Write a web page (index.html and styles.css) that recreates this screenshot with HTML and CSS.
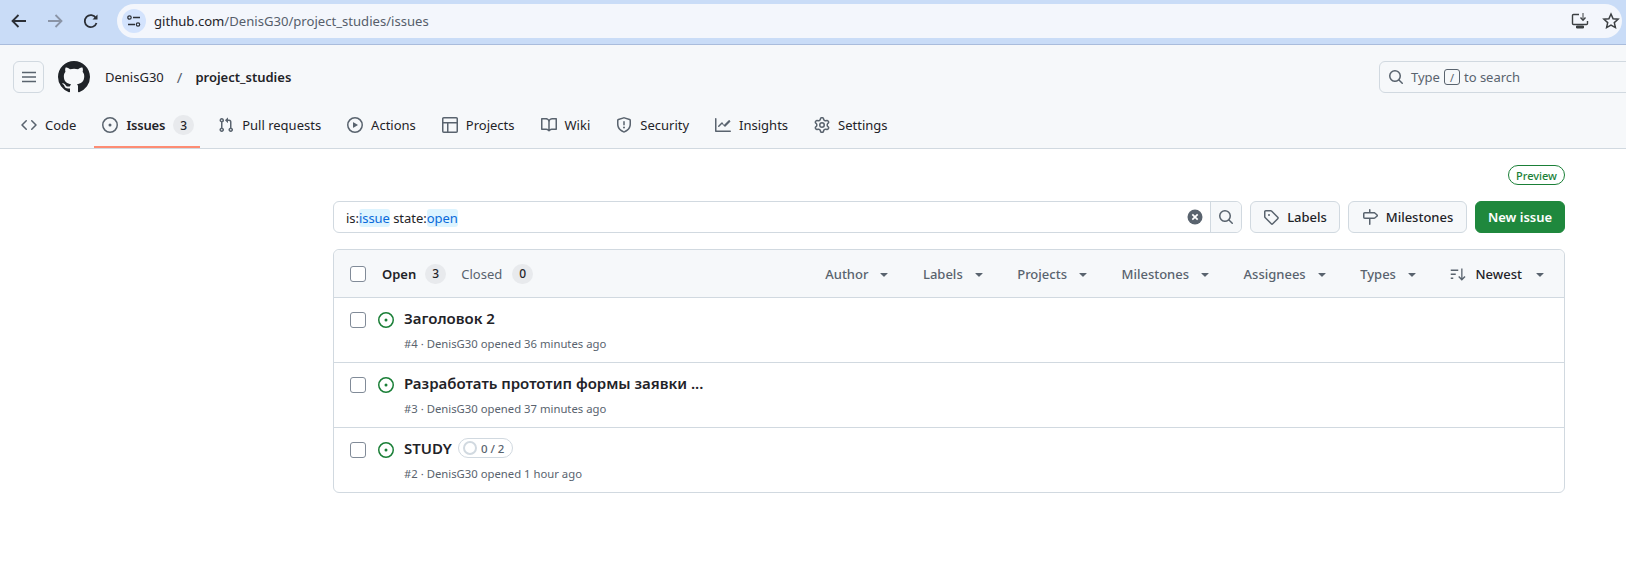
FILE: index.html
```html
<!DOCTYPE html>
<html lang="en">
<head>
    <meta charset="UTF-8">
    <title>Issues - DenisG30/project_studies</title>
    <link rel="stylesheet" href="styles.css">
</head>
<body>

<svg class="sprite" width="0" height="0">
    <symbol id="i-code" viewBox="0 0 16 16"><path d="M11.28 3.22a.75.75 0 0 0-1.06 1.06L13.94 8l-3.72 3.72a.749.749 0 0 0 1.06 1.06l4.25-4.25a.75.75 0 0 0 0-1.06Zm-6.56 0a.75.75 0 0 1 1.06 1.06L2.06 8l3.72 3.72a.749.749 0 1 1-1.06 1.06L.47 8.53a.75.75 0 0 1 0-1.06Z"/></symbol>
    <symbol id="i-issue" viewBox="0 0 16 16"><path d="M8 9.5a1.5 1.5 0 1 0 0-3 1.5 1.5 0 0 0 0 3Z"/><path d="M8 0a8 8 0 1 1 0 16A8 8 0 0 1 8 0ZM1.5 8a6.5 6.5 0 1 0 13 0 6.5 6.5 0 0 0-13 0Z"/></symbol>
    <symbol id="i-pull" viewBox="0 0 16 16"><path d="M1.5 3.25a2.25 2.25 0 1 1 3 2.122v5.256a2.251 2.251 0 1 1-1.5 0V5.372A2.25 2.25 0 0 1 1.5 3.25Zm5.677-.177L9.573.677A.25.25 0 0 1 10 .854V2.5h1A2.5 2.5 0 0 1 13.5 5v5.628a2.251 2.251 0 1 1-1.5 0V5a1 1 0 0 0-1-1h-1v1.646a.25.25 0 0 1-.427.177L7.177 3.427a.25.25 0 0 1 0-.354ZM3.75 2.5a.75.75 0 1 0 0 1.5.75.75 0 0 0 0-1.5Zm0 9.5a.75.75 0 1 0 0 1.5.75.75 0 0 0 0-1.5Zm8.25.75a.75.75 0 1 0 1.5 0 .75.75 0 0 0-1.5 0Z"/></symbol>
    <symbol id="i-play" viewBox="0 0 16 16"><path d="M8 0a8 8 0 1 1 0 16A8 8 0 0 1 8 0ZM1.5 8a6.5 6.5 0 1 0 13 0 6.5 6.5 0 0 0-13 0Zm4.879-2.773 4.264 2.559a.25.25 0 0 1 0 .428l-4.264 2.559A.25.25 0 0 1 6 10.559V5.442a.25.25 0 0 1 .379-.215Z"/></symbol>
    <symbol id="i-table" viewBox="0 0 16 16"><path d="M0 1.75C0 .784.784 0 1.75 0h12.5C15.216 0 16 .784 16 1.75v12.5A1.75 1.75 0 0 1 14.25 16H1.75A1.75 1.75 0 0 1 0 14.25ZM6.5 6.5v8h7.75a.25.25 0 0 0 .25-.25V6.5Zm8-1.5V1.75a.25.25 0 0 0-.25-.25H1.75a.25.25 0 0 0-.25.25V5Zm-13 1.5v7.75c0 .138.112.25.25.25H5v-8Z"/></symbol>
    <symbol id="i-book" viewBox="0 0 16 16"><path d="M0 1.75A.75.75 0 0 1 .75 1h4.253c1.227 0 2.317.59 3 1.501A3.743 3.743 0 0 1 11.006 1h4.245a.75.75 0 0 1 .75.75v10.5a.75.75 0 0 1-.75.75h-4.507a2.25 2.25 0 0 0-1.591.659l-.622.621a.75.75 0 0 1-1.06 0l-.622-.621A2.25 2.25 0 0 0 5.258 13H.75a.75.75 0 0 1-.75-.75Zm7.251 10.324.004-5.073-.002-2.253A2.25 2.25 0 0 0 5.003 2.5H1.5v9h3.757a3.75 3.75 0 0 1 1.994.574ZM8.755 4.75l-.004 7.322a3.752 3.752 0 0 1 1.992-.572H14.5v-9h-3.495a2.25 2.25 0 0 0-2.25 2.25Z"/></symbol>
    <symbol id="i-shield" viewBox="0 0 16 16"><path d="M7.467.133a1.748 1.748 0 0 1 1.066 0l5.25 1.68A1.75 1.75 0 0 1 15 3.48V7c0 1.566-.32 3.182-1.303 4.682-.983 1.498-2.585 2.813-5.032 3.855a1.697 1.697 0 0 1-1.33 0c-2.447-1.042-4.049-2.357-5.032-3.855C1.32 10.182 1 8.566 1 7V3.48a1.75 1.75 0 0 1 1.217-1.667Zm.61 1.429a.25.25 0 0 0-.153 0l-5.25 1.68a.25.25 0 0 0-.174.238V7c0 1.358.275 2.666 1.057 3.86.784 1.194 2.121 2.34 4.366 3.297a.196.196 0 0 0 .154 0c2.245-.956 3.582-2.104 4.366-3.298C13.225 9.666 13.5 8.36 13.5 7V3.48a.251.251 0 0 0-.174-.237l-5.25-1.68ZM8.75 4.75v3a.75.75 0 0 1-1.5 0v-3a.75.75 0 0 1 1.5 0ZM9 10.5a1 1 0 1 1-2 0 1 1 0 0 1 2 0Z"/></symbol>
    <symbol id="i-graph" viewBox="0 0 16 16"><path d="M1.5 1.75V13.5h13.75a.75.75 0 0 1 0 1.5H.75a.75.75 0 0 1-.75-.75V1.75a.75.75 0 0 1 1.5 0Zm14.28 2.53-5.25 5.25a.75.75 0 0 1-1.06 0L7 7.06 4.28 9.78a.751.751 0 0 1-1.042-.018.751.751 0 0 1-.018-1.042l3.25-3.25a.75.75 0 0 1 1.06 0L8.98 7.94l4.72-4.72a.751.751 0 0 1 1.042.018.751.751 0 0 1 .018 1.042Z"/></symbol>
    <symbol id="i-gear" viewBox="0 0 16 16"><path d="M8 0a8.2 8.2 0 0 1 .701.031C9.444.095 9.99.645 10.16 1.29l.288 1.107c.018.066.079.158.212.224.231.114.454.243.668.386.123.082.233.09.299.071l1.103-.303c.644-.176 1.392.021 1.82.63.27.385.506.792.704 1.218.315.675.111 1.422-.364 1.891l-.814.806c-.049.048-.098.147-.088.294.016.257.016.515 0 .772-.01.147.038.246.088.294l.814.806c.475.469.679 1.216.364 1.891a7.977 7.977 0 0 1-.704 1.217c-.428.61-1.176.807-1.82.63l-1.102-.302c-.067-.019-.177-.011-.3.071a5.909 5.909 0 0 1-.668.386c-.133.066-.194.158-.211.224l-.29 1.106c-.168.646-.715 1.196-1.458 1.26a8.006 8.006 0 0 1-1.402 0c-.743-.064-1.289-.614-1.458-1.26l-.289-1.106c-.018-.066-.079-.158-.212-.224a5.738 5.738 0 0 1-.668-.386c-.123-.082-.233-.09-.299-.071l-1.103.303c-.644.176-1.392-.021-1.82-.63a8.12 8.12 0 0 1-.704-1.218c-.315-.675-.111-1.422.363-1.891l.815-.806c.05-.048.098-.147.088-.294a6.214 6.214 0 0 1 0-.772c.01-.147-.038-.246-.088-.294l-.815-.806C.635 6.045.431 5.298.746 4.623a7.92 7.92 0 0 1 .704-1.217c.428-.61 1.176-.807 1.82-.63l1.102.302c.067.019.177.011.3-.071.214-.143.437-.272.668-.386.133-.066.194-.158.211-.224l.29-1.106C6.009.645 6.556.095 7.299.03 7.53.01 7.764 0 8 0Zm-.571 1.525c-.036.003-.108.036-.137.146l-.289 1.105c-.147.561-.549.967-.998 1.189-.173.086-.34.183-.5.29-.417.278-.97.423-1.529.27l-1.103-.303c-.109-.03-.175.016-.195.045-.22.312-.412.644-.573.99-.014.031-.021.11.059.19l.815.806c.411.406.562.957.53 1.456a4.709 4.709 0 0 0 0 .582c.032.499-.119 1.05-.53 1.456l-.815.806c-.081.08-.073.159-.059.19.162.346.353.677.573.989.02.03.085.076.195.046l1.102-.303c.56-.153 1.113-.008 1.53.27.161.107.328.204.501.29.447.222.85.629.997 1.189l.289 1.105c.029.109.101.143.137.146a6.6 6.6 0 0 0 1.142 0c.036-.003.108-.036.137-.146l.289-1.105c.147-.561.549-.967.998-1.189.173-.086.34-.183.5-.29.417-.278.97-.423 1.529-.27l1.103.303c.109.029.175-.016.195-.045.22-.313.411-.644.573-.99.014-.031.021-.11-.059-.19l-.815-.806c-.411-.406-.562-.957-.53-1.456a4.709 4.709 0 0 0 0-.582c-.032-.499.119-1.05.53-1.456l.815-.806c.081-.08.073-.159.059-.19a6.464 6.464 0 0 0-.573-.989c-.02-.03-.085-.076-.195-.046l-1.102.303c-.56.153-1.113.008-1.53-.27a4.44 4.44 0 0 0-.501-.29c-.447-.222-.85-.629-.997-1.189l-.289-1.105c-.029-.11-.101-.143-.137-.146a6.6 6.6 0 0 0-1.142 0ZM11 8a3 3 0 1 1-6 0 3 3 0 0 1 6 0ZM9.5 8a1.5 1.5 0 1 0-3.001.001A1.5 1.5 0 0 0 9.5 8Z"/></symbol>
    <symbol id="i-search" viewBox="0 0 16 16"><path d="M10.68 11.74a6 6 0 0 1-7.922-8.982 6 6 0 0 1 8.982 7.922l3.04 3.04a.749.749 0 0 1-.326 1.275.749.749 0 0 1-.734-.215ZM11.5 7a4.499 4.499 0 1 0-8.997 0A4.499 4.499 0 0 0 11.5 7Z"/></symbol>
    <symbol id="i-tag" viewBox="0 0 16 16"><path d="M1 7.775V2.75C1 1.784 1.784 1 2.75 1h5.025c.464 0 .91.184 1.238.513l6.25 6.25a1.75 1.75 0 0 1 0 2.474l-5.026 5.026a1.75 1.75 0 0 1-2.474 0l-6.25-6.25A1.752 1.752 0 0 1 1 7.775Zm1.5 0c0 .066.026.13.073.177l6.25 6.25a.25.25 0 0 0 .354 0l5.025-5.025a.25.25 0 0 0 0-.354l-6.25-6.25a.25.25 0 0 0-.177-.073H2.75a.25.25 0 0 0-.25.25ZM6 5a1 1 0 1 1 0 2 1 1 0 0 1 0-2Z"/></symbol>
    <symbol id="i-milestone" viewBox="0 0 16 16"><path d="M7.75 0a.75.75 0 0 1 .75.75V3h3.634c.414 0 .814.147 1.13.414l2.07 1.75a1.75 1.75 0 0 1 0 2.672l-2.07 1.75a1.75 1.75 0 0 1-1.13.414H8.5v5.25a.75.75 0 0 1-1.5 0V10H2.75A1.75 1.75 0 0 1 1 8.25v-3.5C1 3.784 1.784 3 2.75 3H7V.75A.75.75 0 0 1 7.75 0Zm4.384 8.5a.25.25 0 0 0 .161-.06l2.07-1.75a.248.248 0 0 0 0-.38l-2.07-1.75a.25.25 0 0 0-.161-.06H2.75a.25.25 0 0 0-.25.25v3.5c0 .138.112.25.25.25h9.384Z"/></symbol>
    <symbol id="i-caret" viewBox="0 0 16 16"><path d="m4.427 7.427 3.396 3.396a.25.25 0 0 0 .354 0l3.396-3.396A.25.25 0 0 0 11.396 7H4.604a.25.25 0 0 0-.177.427Z"/></symbol>
    <symbol id="i-sort" viewBox="0 0 16 16"><path d="M.75 3.5h7.5v1.4H.75Zm0 4h5v1.4h-5Zm0 4h2.5v1.4h-2.5Z"/><path d="M12.5 2.5v9.6l2-2 1 1-3.7 3.6-3.6-3.6 1-1 2 2V2.5Z"/></symbol>
</svg>

<div class="browser-bar">
    <svg class="chrome-icon" viewBox="0 0 20 20"><path d="M17 10H4M9.500 4 3.500 10l6 6" fill="none" stroke="#2b2f36" stroke-width="1.800"/></svg>
    <svg class="chrome-icon" viewBox="0 0 20 20"><path d="M3 10h13M10.500 4l6 6-6 6" fill="none" stroke="#8a94a6" stroke-width="1.800"/></svg>
    <svg class="chrome-icon" viewBox="0 0 20 20"><path d="M15.500 12a6 6 0 1 1-.6-5" fill="none" stroke="#2b2f36" stroke-width="1.800"/><path d="M16.500 3.500v5h-5z" fill="#2b2f36"/></svg>
    <div class="omnibox">
        <span class="site-info">
            <svg width="14" height="14" viewBox="0 0 14 14"><path d="M6 3.500h7M1 10.500h7" fill="none" stroke="#2b2f36" stroke-width="1.300"/><circle cx="2.500" cy="3.500" r="1.700" fill="none" stroke="#2b2f36" stroke-width="1.200"/><circle cx="11" cy="10.500" r="1.700" fill="none" stroke="#2b2f36" stroke-width="1.200"/></svg>
        </span>
        <span class="url">github.com<span class="url-path">/DenisG30/project_studies/issues</span></span>
        <svg class="omni-icon" viewBox="0 0 18 18"><path d="M8 2.500H2.500a1 1 0 0 0-1 1v8a1 1 0 0 0 1 1h13a1 1 0 0 0 1-1V9" fill="none" stroke="#3c4043" stroke-width="1.400"/><path d="M5.500 14h7v2h-7zM12 1v6" fill="#3c4043" stroke="#3c4043"/><path d="m9.500 5.500 2.500 2.700 2.500-2.700" fill="none" stroke="#3c4043" stroke-width="1.400"/></svg>
        <svg class="omni-icon star" viewBox="0 0 18 18"><path d="m9 2 2.100 4.700 5 .5-3.800 3.400 1.100 5L9 13l-4.400 2.600 1.100-5-3.800-3.400 5-.5Z" fill="none" stroke="#3c4043" stroke-width="1.500"/></svg>
    </div>
</div>

<header class="app-header">
    <div class="header-top">
        <button class="menu-button">
            <svg width="16" height="16" viewBox="0 0 16 16" class="muted-icon"><path d="M1 2.750h14v1.500H1zM1 7.250h14v1.500H1zM1 11.750h14v1.500H1z"/></svg>
        </button>
        <svg class="logo" viewBox="0 0 16 16"><path d="M8 0c4.420 0 8 3.580 8 8a8.013 8.013 0 0 1-5.450 7.590c-.4.080-.55-.17-.55-.38 0-.27.010-1.130.010-2.200 0-.75-.25-1.230-.54-1.480 1.780-.2 3.650-.88 3.650-3.950 0-.88-.31-1.590-.82-2.150.080-.2.360-1.020-.080-2.120 0 0-.67-.22-2.200.82-.64-.18-1.320-.27-2-.27-.68 0-1.360.090-2 .27-1.530-1.030-2.200-.82-2.200-.82-.44 1.100-.16 1.920-.080 2.120-.51.560-.82 1.280-.82 2.150 0 3.060 1.860 3.750 3.640 3.950-.23.2-.44.550-.51 1.070-.46.210-1.610.550-2.330-.66-.15-.24-.6-.83-1.230-.82-.67.010-.27.380.010.530.34.190.730.9.820 1.130.16.450.680 1.310 2.690.940 0 .670.010 1.300.010 1.490 0 .210-.15.450-.55.380A7.995 7.995 0 0 1 0 8c0-4.420 3.580-8 8-8Z"/></svg>
        <span class="owner">DenisG30</span>
        <span class="slash">/</span>
        <span class="repo">project_studies</span>
        <div class="global-search">
            <svg class="muted-icon" width="16" height="16"><use href="#i-search"/></svg>
            <span>Type</span><kbd>/</kbd><span>to search</span>
        </div>
    </div>
    <nav class="tabs">
        <a class="tab"><svg width="16" height="16"><use href="#i-code"/></svg>Code</a>
        <a class="tab tab-active"><svg width="16" height="16"><use href="#i-issue"/></svg>Issues<span class="count">3</span></a>
        <a class="tab"><svg width="16" height="16"><use href="#i-pull"/></svg>Pull requests</a>
        <a class="tab"><svg width="16" height="16"><use href="#i-play"/></svg>Actions</a>
        <a class="tab"><svg width="16" height="16"><use href="#i-table"/></svg>Projects</a>
        <a class="tab"><svg width="16" height="16"><use href="#i-book"/></svg>Wiki</a>
        <a class="tab"><svg width="16" height="16"><use href="#i-shield"/></svg>Security</a>
        <a class="tab"><svg width="16" height="16"><use href="#i-graph"/></svg>Insights</a>
        <a class="tab"><svg width="16" height="16"><use href="#i-gear"/></svg>Settings</a>
    </nav>
</header>

<main class="content">
    <div class="preview-row"><span class="preview">Preview</span></div>

    <div class="toolbar">
        <div class="filter-box">
            <div class="filter-text">is:<span class="token">issue</span> state:<span class="token">open</span></div>
            <span class="clear">
                <svg width="16" height="16" viewBox="0 0 16 16"><circle cx="8" cy="8" r="7.500" fill="#59636e"/><path d="m5.300 5.300 5.400 5.400m0-5.400-5.400 5.400" stroke="#fff" stroke-width="1.700"/></svg>
            </span>
            <span class="filter-search"><svg class="muted-icon" width="16" height="16"><use href="#i-search"/></svg></span>
        </div>
        <button class="btn btn-labels"><svg class="muted-icon" width="16" height="16"><use href="#i-tag"/></svg>Labels</button>
        <button class="btn btn-milestones"><svg class="muted-icon" width="16" height="16"><use href="#i-milestone"/></svg>Milestones</button>
        <button class="btn btn-primary">New issue</button>
    </div>

    <section class="issues">
        <div class="issues-head">
            <span class="check"></span>
            <span class="state state-open">Open</span><span class="count">3</span>
            <span class="state state-closed">Closed</span><span class="count">0</span>
            <div class="menus">
                <span class="menu">Author<svg width="16" height="16"><use href="#i-caret"/></svg></span>
                <span class="menu">Labels<svg width="16" height="16"><use href="#i-caret"/></svg></span>
                <span class="menu">Projects<svg width="16" height="16"><use href="#i-caret"/></svg></span>
                <span class="menu">Milestones<svg width="16" height="16"><use href="#i-caret"/></svg></span>
                <span class="menu">Assignees<svg width="16" height="16"><use href="#i-caret"/></svg></span>
                <span class="menu">Types<svg width="16" height="16"><use href="#i-caret"/></svg></span>
                <span class="menu menu-sort"><svg class="sort-icon" width="16" height="16"><use href="#i-sort"/></svg>Newest<svg class="sort-caret" width="16" height="16"><use href="#i-caret"/></svg></span>
            </div>
        </div>

        <div class="issue">
            <span class="check"></span>
            <svg class="issue-icon" width="16" height="16"><use href="#i-issue"/></svg>
            <div>
                <div class="issue-title">Заголовок 2</div>
                <div class="issue-meta">#4 · DenisG30 opened 36 minutes ago</div>
            </div>
        </div>
        <div class="issue">
            <span class="check"></span>
            <svg class="issue-icon" width="16" height="16"><use href="#i-issue"/></svg>
            <div>
                <div class="issue-title">Разработать прототип формы заявки ...</div>
                <div class="issue-meta">#3 · DenisG30 opened 37 minutes ago</div>
            </div>
        </div>
        <div class="issue">
            <span class="check"></span>
            <svg class="issue-icon" width="16" height="16"><use href="#i-issue"/></svg>
            <div>
                <div class="issue-title">STUDY<span class="progress"><span class="ring"></span>0 / 2</span></div>
                <div class="issue-meta">#2 · DenisG30 opened 1 hour ago</div>
            </div>
        </div>
    </section>
</main>

</body>
</html>
```

FILE: styles.css
```css
* {
    box-sizing: border-box;
}
html, body {
    height: 100%;
}
body {
    margin: 0;
    overflow: hidden;
    background: #fff;
    color: #1f2328;
    font-family: 'Noto Sans', sans-serif;
    font-size: 13px;
}
svg {
    fill: currentColor;
    flex: none;
}
button {
    font-family: inherit;
}
.sprite {
    position: absolute;
}
.muted-icon {
    color: #59636e;
}

/* browser chrome */
.browser-bar {
    display: flex;
    align-items: center;
    height: 45px;
    padding: 3px 4px 5px 9px;
    background: #c9dcf7;
    border-bottom: 1px solid #a9bcdc;
}
.chrome-icon {
    width: 20px;
    height: 20px;
    margin-right: 16px;
}
.omnibox {
    display: flex;
    align-items: center;
    flex: 1;
    height: 34px;
    padding: 0 2px 0 5px;
    background: #f3f6fc;
    border-radius: 17px;
}
.site-info {
    display: flex;
    align-items: center;
    justify-content: center;
    width: 24px;
    height: 24px;
    border-radius: 50%;
    background: #d3e3fd;
}
.url {
    flex: 1;
    margin-left: 8px;
    font-size: 13.100px;
    color: #1f2328;
}
.url-path {
    color: #565e6b;
}
.omni-icon {
    width: 18px;
    height: 18px;
}
.star {
    margin-left: 13px;
}

/* repo header */
.app-header {
    height: 104px;
    background: #f6f8fa;
    border-bottom: 1px solid #d1d9e0;
}
.header-top {
    display: flex;
    align-items: center;
    height: 61px;
    padding: 16px 0 13px 13px;
}
.menu-button {
    display: flex;
    align-items: center;
    justify-content: center;
    width: 31px;
    height: 32px;
    padding: 0;
    background: transparent;
    border: 1px solid #d1d9e0;
    border-radius: 6px;
}
.logo {
    width: 32px;
    height: 32px;
    margin-left: 14px;
    color: #1f2328;
}
.owner {
    margin-left: 15px;
}
.slash {
    margin: 0 13px;
    color: #59636e;
    font-size: 15px;
}
.repo {
    font-weight: 600;
}
.global-search {
    display: flex;
    align-items: center;
    width: 280px;
    height: 32px;
    margin-left: auto;
    margin-right: -33px;
    padding-left: 8px;
    color: #59636e;
    border: 1px solid #d1d9e0;
    border-radius: 6px;
}
.global-search > span:first-of-type {
    margin-left: 7px;
}
.global-search kbd {
    display: flex;
    align-items: center;
    justify-content: center;
    width: 16px;
    height: 16px;
    margin: 0 4px;
    font-family: inherit;
    font-size: 11px;
    border: 1px solid #59636e;
    border-radius: 3px;
}
.tabs {
    display: flex;
    gap: 10px;
    height: 42px;
    padding-left: 13px;
}
.tab {
    display: flex;
    align-items: center;
    gap: 8px;
    height: 42px;
    padding: 0 8px 2px;
    border-bottom: 2px solid transparent;
}
.tab svg {
    color: #59636e;
}
.tab-active {
    padding-right: 6px;
    font-weight: 600;
    letter-spacing: -0.2px;
    border-bottom-color: #fd8c73;
}
.count {
    display: inline-flex;
    align-items: center;
    justify-content: center;
    min-width: 21px;
    height: 20px;
    padding: 0 6px;
    font-size: 12px;
    font-weight: 500;
    letter-spacing: 0;
    background: #818b981f;
    border-radius: 10px;
}

/* issues */
.content {
    width: 1232px;
    margin-left: 333px;
}
.preview-row {
    display: flex;
    justify-content: flex-end;
    padding-top: 16px;
}
.preview {
    display: flex;
    align-items: center;
    justify-content: center;
    width: 57px;
    height: 20px;
    color: #1a7f37;
    font-size: 11px;
    font-weight: 500;
    border: 1px solid #1a7f37;
    border-radius: 10px;
}
.toolbar {
    display: flex;
    gap: 8px;
    margin-top: 16px;
}
.filter-box {
    display: flex;
    align-items: center;
    flex: 1;
    height: 32px;
    border: 1px solid #d1d9e0;
    border-radius: 6px;
}
.filter-text {
    flex: 1;
    padding: 1px 0 0 12px;
    letter-spacing: -0.05px;
}
.token {
    color: #0969da;
    background: #ddf4ff;
    border-radius: 3px;
}
.clear {
    display: flex;
    margin-right: 7px;
}
.filter-search {
    display: flex;
    align-items: center;
    justify-content: center;
    width: 31px;
    height: 30px;
    background: #f6f8fa;
    border-left: 1px solid #d1d9e0;
    border-radius: 0 6px 6px 0;
}
.btn {
    display: flex;
    align-items: center;
    justify-content: center;
    gap: 8px;
    height: 32px;
    padding: 0;
    color: #1f2328;
    font-size: 13px;
    font-weight: 500;
    white-space: nowrap;
    background: #f6f8fa;
    border: 1px solid #d1d9e0;
    border-radius: 6px;
}
.btn-labels {
    width: 90px;
}
.btn-milestones {
    width: 119px;
}
.btn-primary {
    width: 90px;
    color: #fff;
    font-weight: 600;
    background: #1f883d;
    border-color: #1f883d;
}
.issues {
    margin-top: 16px;
    border: 1px solid #d1d9e0;
    border-radius: 6px;
}
.issues-head {
    display: flex;
    align-items: center;
    height: 47px;
    padding: 0 16px;
    background: #f6f8fa;
    border-radius: 6px 6px 0 0;
}
.check {
    flex: none;
    width: 16px;
    height: 16px;
    background: #fff;
    border: 1px solid #818b98;
    border-radius: 3px;
}
.state {
    margin-right: 9px;
}
.state-open {
    margin-left: 16px;
    font-weight: 600;
}
.state-closed {
    margin-left: 15px;
    margin-right: 10px;
    color: #59636e;
}
.menus {
    display: flex;
    align-items: center;
    margin-left: auto;
    color: #59636e;
    font-weight: 500;
}
.menu {
    display: flex;
    align-items: center;
    gap: 8px;
    margin-left: 30.500px;
}
.menu-sort {
    color: #1f2328;
}
.sort-icon {
    margin-right: 1px;
    color: #59636e;
}
.sort-caret {
    margin-left: 2px;
    color: #59636e;
}
.issue {
    display: flex;
    align-items: flex-start;
    height: 65px;
    padding: 8px 16px 0;
    border-top: 1px solid #d1d9e0;
}
.issue .check {
    margin-top: 6px;
}
.issue-icon {
    margin: 6px 10px 0 12px;
    color: #1a7f37;
}
.issue-title {
    display: flex;
    align-items: center;
    height: 24px;
    font-size: 15px;
    font-weight: 600;
}
.issue-meta {
    margin-top: 6px;
    color: #59636e;
    font-size: 11.300px;
}
.progress {
    display: inline-flex;
    align-items: center;
    gap: 4px;
    height: 20px;
    margin-left: 6px;
    padding: 0 8px 0 4px;
    color: #59636e;
    font-size: 11.500px;
    font-weight: 500;
    border: 1px solid #d1d9e0;
    border-radius: 10px;
}
.ring {
    width: 14px;
    height: 14px;
    border: 2px solid #d1d9e0;
    border-radius: 50%;
}
```
